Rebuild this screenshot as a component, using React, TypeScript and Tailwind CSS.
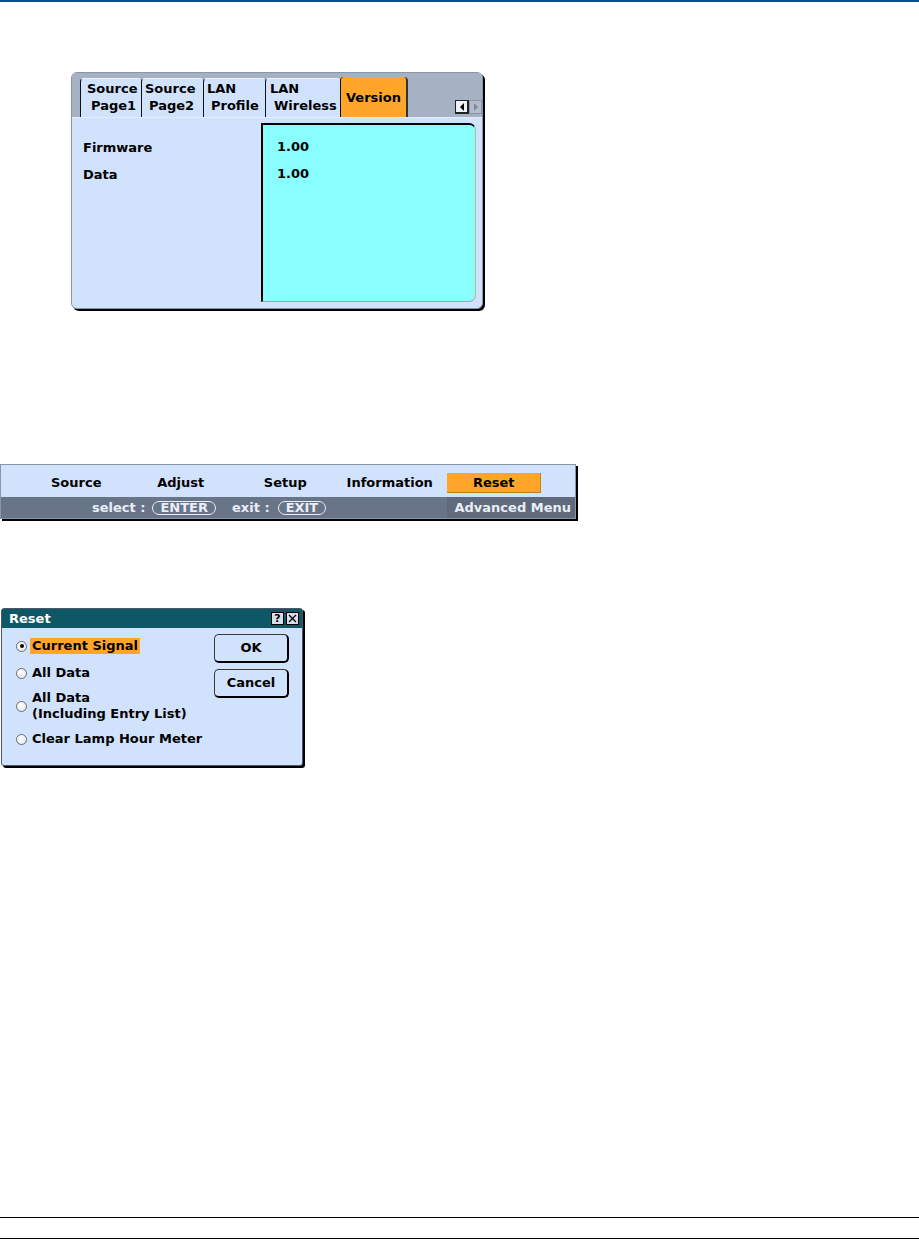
import React from "react";

const tabs = [
  { l1: "Source", l2: "Page1", w: "w-[61px]", pl: "pl-[6px]" },
  { l1: "Source", l2: "Page2", w: "w-[62px]", pl: "pl-[3px]" },
  { l1: "LAN", l2: "Profile", w: "w-[62px]", pl: "pl-[3px]" },
  { l1: "LAN", l2: "Wireless", w: "w-[75px]", pl: "pl-[4px]" },
];

function Radio({ on }: { on?: boolean }) {
  return (
    <span className="w-[11px] h-[11px] rounded-full border border-[#6a6a6a] bg-[radial-gradient(circle_at_35%_35%,#ffffff,#dfe6ee)] flex items-center justify-center shrink-0">
      {on && <span className="w-[4px] h-[4px] rounded-full bg-black" />}
    </span>
  );
}

function Option({ on, children }: { on?: boolean; children: React.ReactNode }) {
  return (
    <div className="flex items-center">
      <Radio on={on} />
      <span className={`ml-[3px] px-[2px] leading-[16px] ${on ? "bg-[#ffa62a]" : ""}`}>{children}</span>
    </div>
  );
}

function Btn({ children }: { children: React.ReactNode }) {
  return (
    <div className="h-[29px] w-[75px] rounded-[5px] border border-[#3a3a3a] border-r-2 border-b-2 border-r-black border-b-black bg-[#d0e2fc] flex items-center justify-center">
      {children}
    </div>
  );
}

export default function App() {
  return (
    <div className="w-[919px] h-[1239px] bg-white flex flex-col font-['DejaVu_Sans',sans-serif] font-bold text-[13px] text-black">
      <div className="h-[2px] bg-[#0b4f9c] shrink-0" />

      {/* Version panel */}
      <div className="ml-[71px] mt-[70px] w-[412px] h-[237px] rounded-[6px] border border-[#8a96a8] shadow-[2px_2px_0_#000] bg-[#d0e2fc] overflow-hidden flex flex-col shrink-0">
        <div className="h-[45px] bg-[#a6b2c4] flex items-end pl-[8px] border-b border-[#e4ecf8] shrink-0">
          {tabs.map((t, i) => (
            <div
              key={i}
              className={`${t.w} h-[39px] bg-[#d0e2fc] border-l border-l-[#111] border-t border-t-[#eef3fb] rounded-tl-[4px] rounded-tr-[3px] ${t.pl} pt-[1px] leading-[17px]`}
            >
              <div>{t.l1}</div>
              <div className="pl-[4px]">{t.l2}</div>
            </div>
          ))}
          <div className="w-[68px] h-[40px] bg-[#ffa62a] border-l border-l-[#111] border-r-2 border-r-[#333] rounded-tl-[4px] rounded-tr-[4px] flex items-center pl-[5px] pt-[1px]">
            Version
          </div>
          <div className="ml-auto mb-[3px] flex">
            <div className="w-[14px] h-[14px] bg-[#eef2f8] border border-[#222] border-r-2 border-b-2 flex items-center justify-center">
              <svg width="6" height="8" viewBox="0 0 6 8"><path d="M5 0 L1 4 L5 8 Z" fill="#000" /></svg>
            </div>
            <div className="w-[13px] h-[14px] bg-[#b4bccb] border border-[#8a94a4] flex items-center justify-center">
              <svg width="6" height="8" viewBox="0 0 6 8"><path d="M1 0 L5 4 L1 8 Z" fill="#7e8898" /></svg>
            </div>
          </div>
        </div>
        <div className="flex-1 flex pt-[5px] pr-[6px] pb-[6px]">
          <div className="w-[189px] pl-[11px] pt-[11px]">
            <div className="h-[27px] leading-[27px]">Firmware</div>
            <div className="h-[27px] leading-[27px]">Data</div>
          </div>
          <div className="flex-1 bg-[#88fffe] border-l-2 border-t-2 border-l-black border-t-black border-r border-b border-r-[#b8b88a] border-b-[#9aa2aa] rounded-tr-[7px] rounded-br-[7px] pl-[14px] pt-[8px]">
            <div className="h-[27px] leading-[27px]">1.00</div>
            <div className="h-[27px] leading-[27px]">1.00</div>
          </div>
        </div>
      </div>

      {/* Menu bar */}
      <div className="mt-[155px] w-[576px] border border-[#8a96a8] shadow-[2px_2px_0_#000] flex flex-col shrink-0">
        <div className="h-[32px] bg-[#d0e2fc] flex items-center pl-[23px] pt-[3px]">
          <div className="w-[104.5px] text-center">Source</div>
          <div className="w-[104.5px] text-center">Adjust</div>
          <div className="w-[104.5px] text-center">Setup</div>
          <div className="w-[104.5px] text-center">Information</div>
          <div className="w-[104.5px] flex justify-center">
            <div className="w-[94px] h-[20px] bg-[#ffa62a] border-r border-b border-[#c0801a] text-center leading-[20px]">Reset</div>
          </div>
        </div>
        <div className="h-[21px] bg-[#687488] flex items-center text-[#e8eef8]">
          <div className="pl-[91px] pt-[1px] flex items-center">
            <span>select :</span>
            <span className="ml-[7px] border border-[#e8eef8] rounded-full px-[7px] leading-[12px]">ENTER</span>
            <span className="ml-[16px]">exit :</span>
            <span className="ml-[8px] border border-[#e8eef8] rounded-full px-[7px] leading-[12px]">EXIT</span>
          </div>
          <div className="ml-auto h-full bg-[#5f6a7c] w-[128px] flex items-center justify-end pr-[4px] pt-[1px]">Advanced Menu</div>
        </div>
      </div>

      {/* Reset dialog */}
      <div className="mt-[89px] ml-[1px] w-[302px] h-[158px] border border-[#4c5868] shadow-[2px_2px_0_#000] rounded-[3px] bg-[#d0e2fc] flex flex-col shrink-0">
        <div className="h-[19px] bg-[#0e5866] flex items-center pl-[7px] pr-[3px] text-white">
          <span className="pt-[1px]">Reset</span>
          <div className="ml-auto flex gap-[2px]">
            <div className="w-[13px] h-[13px] bg-[#d8dee8] border border-black text-black text-[11px] leading-[11px] text-center">?</div>
            <div className="w-[13px] h-[13px] bg-[#d8dee8] border border-black flex items-center justify-center">
              <svg width="9" height="9" viewBox="0 0 9 9"><path d="M1 1 L8 8 M8 1 L1 8" stroke="#000" strokeWidth="1.3" /></svg>
            </div>
          </div>
        </div>
        <div className="flex-1 flex">
          <div className="flex-1 pl-[14px] pt-[10px] flex flex-col">
            <Option on>Current Signal</Option>
            <div className="mt-[11px]"><Option>All Data</Option></div>
            <div className="mt-[9px]">
              <Option>
                All Data
                <br />
                (Including Entry List)
              </Option>
            </div>
            <div className="mt-[9px]"><Option>Clear Lamp Hour Meter</Option></div>
          </div>
          <div className="w-[75px] mr-[13px] pt-[6px] flex flex-col gap-[6px]">
            <Btn>OK</Btn>
            <Btn>Cancel</Btn>
          </div>
        </div>
      </div>

      <div className="mt-auto h-px bg-black shrink-0" />
      <div className="h-[20px] shrink-0" />
      <div className="h-px bg-black shrink-0" />
    </div>
  );
}
